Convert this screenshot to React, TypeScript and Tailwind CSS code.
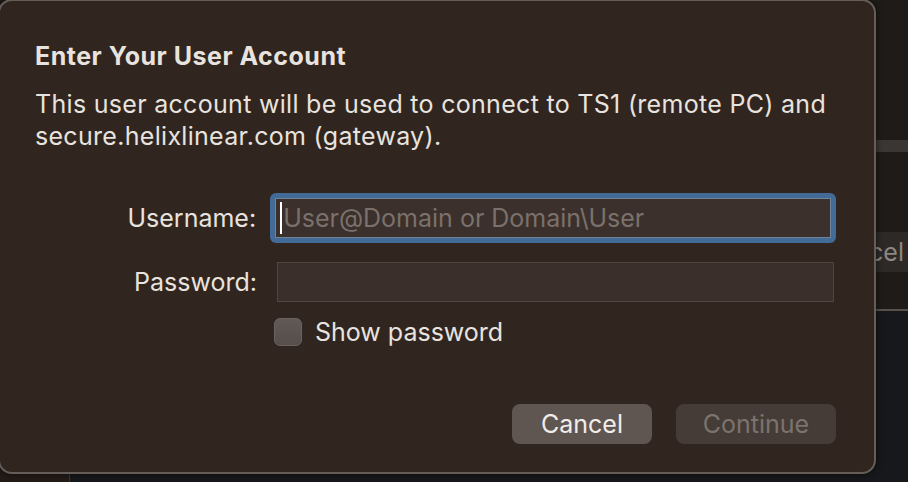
import React from "react";

const font = { fontFamily: "Inter, 'Noto Sans', sans-serif" };

function Background() {
  return (
    <div className="flex h-full w-full">
      <div className="w-[70px] h-full bg-[#221b18] border-r border-[#3a3633]" />
      <div className="flex-1 flex flex-col">
        <div className="h-[311px] bg-[#1e1b18] flex flex-col border-b-2 border-[#56514d]">
          <div className="h-[140px]" />
          <div className="h-[12px] bg-[#3a3633]" />
          <div className="h-[80px]" />
          <div className="flex justify-end">
            <div className="h-[40px] px-[4px] bg-[#2c2926] text-[25px] leading-[40px] text-[#8d8681]">
              Cancel
            </div>
          </div>
        </div>
        <div className="flex-1 bg-[#16181b]" />
      </div>
    </div>
  );
}

function Dialog() {
  return (
    <div className="absolute left-[-2px] top-[-1px] w-[878px] h-[475px] rounded-[14px] border-2 border-[#665d58] bg-[#30251f] shadow-[0_0_6px_rgba(0,0,0,0.6)] flex flex-col pl-[35px] pr-[38px] pt-[40px]">
      {/* Title */}
      <h1 className="text-[25px] font-bold leading-[30px] text-[#e8e3df] tracking-[0.5px]">
        Enter Your User Account
      </h1>

      {/* Description */}
      <p className="mt-[17px] text-[25px] leading-[32px] text-[#e8e3df] tracking-[0.3px]">
        This user account will be used to connect to TS1 (remote PC) and
        <br />
        secure.helixlinear.com (gateway).
      </p>

      {/* Username */}
      <div className="mt-[41px] flex items-center">
        <label className="w-[222px] text-right text-[25px] leading-[30px] text-[#e8e3df]">Username:</label>
        <div className="ml-[14px] w-[568px] h-[50px] rounded-[6px] bg-[#426b98] p-[5px]">
          <div className="h-full w-full bg-[#3b302b] border border-[#6f8499] flex items-center pl-[4px]">
            <span className="w-[2px] h-[32px] bg-white" />
            <span className="ml-[1px] text-[25px] leading-[30px] text-[#7a716c]">User@Domain or Domain\User</span>
          </div>
        </div>
      </div>

      {/* Password */}
      <div className="mt-[19px] flex items-center">
        <label className="w-[222px] text-right text-[25px] leading-[30px] text-[#e8e3df]">Password:</label>
        <div className="ml-[20px] w-[557px] h-[40px] bg-[#3a2f2a] border border-[#50453f]" />
      </div>

      {/* Show password */}
      <div className="mt-[16px] ml-[239px] flex items-center h-[28px]">
        <div className="w-[28px] h-[28px] rounded-[6px] bg-gradient-to-b from-[#615955] to-[#564e4a] border border-[#6a625e]" />
        <span className="ml-[13px] text-[25px] leading-[28px] text-[#e8e3df]">Show password</span>
      </div>

      {/* Buttons */}
      <div className="mt-[58px] flex justify-end gap-[24px]">
        <button className="w-[140px] h-[40px] rounded-[8px] bg-[#605651] text-[25px] leading-[30px] text-[#f0ece9]">
          Cancel
        </button>
        <button className="w-[160px] h-[40px] rounded-[8px] bg-[#463c37] text-[25px] leading-[30px] text-[#7c736e]">
          Continue
        </button>
      </div>
    </div>
  );
}

export default function App() {
  return (
    <div className="relative w-[908px] h-[482px] overflow-hidden" style={font}>
      <Background />
      <Dialog />
    </div>
  );
}
